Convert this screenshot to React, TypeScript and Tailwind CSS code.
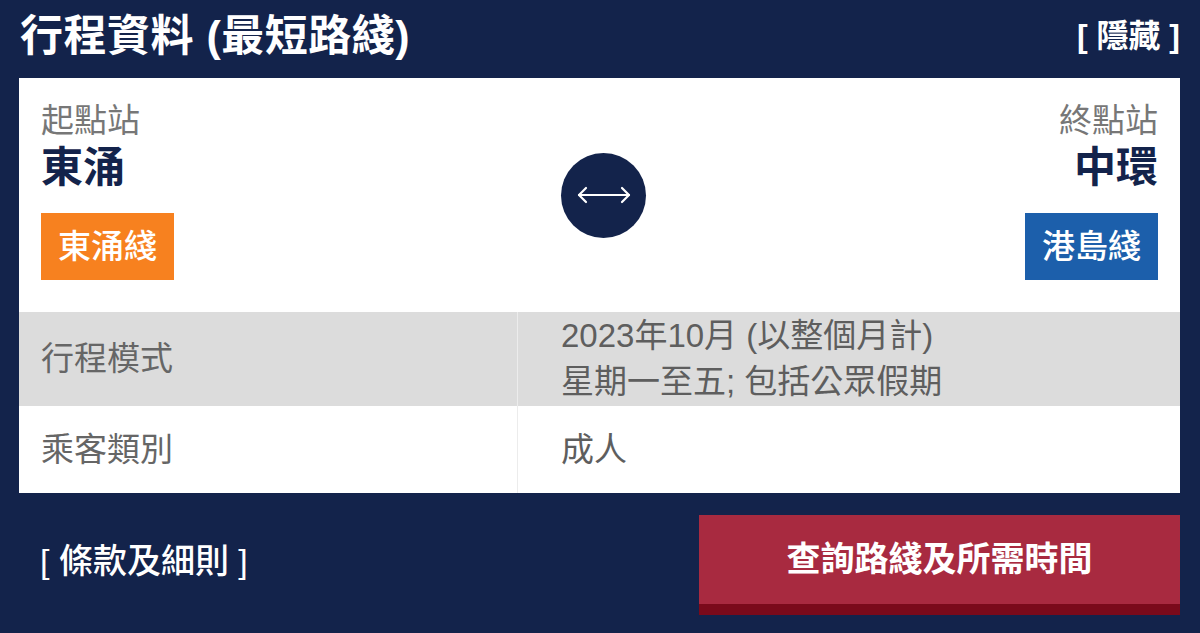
import React from "react";

const FONT = { fontFamily: '"Liberation Sans", "Noto Sans CJK TC", sans-serif' };

function SwapArrow() {
  return (
    <svg width="54" height="20" viewBox="0 0 54 20" fill="none" stroke="white" strokeWidth="2.2" strokeLinecap="round" strokeLinejoin="round">
      <line x1="2" y1="10" x2="52" y2="10" />
      <polyline points="9,3 2,10 9,17" />
      <polyline points="45,3 52,10 45,17" />
    </svg>
  );
}

export default function App() {
  return (
    <div className="w-[1200px] h-[633px] bg-[#13234b] flex flex-col overflow-hidden" style={FONT}>
      {/* Header */}
      <div className="h-[78px] flex items-center justify-between pl-[20px] pr-[20px] pb-[6px]">
        <h1 className="text-white font-bold text-[43px] leading-none tracking-[0.5px]">行程資料 (最短路綫)</h1>
        <span className="text-white font-bold text-[32px] leading-none">[ 隱藏 ]</span>
      </div>

      {/* Card */}
      <div className="mx-[19px] mr-[20px] bg-white flex flex-col">
        <div className="h-[234px] grid grid-cols-[1fr_auto_1fr] items-center px-[22px]">
          <div className="flex flex-col items-start pb-[10px]">
            <span className="text-[#777777] text-[33px] leading-[42px]">起點站</span>
            <span className="text-[#13234b] font-bold text-[42px] leading-[52px]">東涌</span>
            <span className="mt-[19px] h-[67px] px-[17px] flex items-center bg-[#f7811f] text-white text-[33px] font-medium">東涌綫</span>
          </div>
          <div className="w-[85px] h-[85px] rounded-full bg-[#13234b] flex items-center justify-center ml-[8px]">
            <SwapArrow />
          </div>
          <div className="flex flex-col items-end pb-[10px]">
            <span className="text-[#777777] text-[33px] leading-[42px]">終點站</span>
            <span className="text-[#13234b] font-bold text-[42px] leading-[52px]">中環</span>
            <span className="mt-[19px] h-[67px] px-[17px] flex items-center bg-[#1c5fab] text-white text-[33px] font-medium">港島綫</span>
          </div>
        </div>

        {/* Table */}
        <div className="grid grid-cols-[498px_1fr] bg-[#dcdcdc] h-[94px]">
          <div className="flex items-center pl-[22px] text-[#666666] text-[33px]">行程模式</div>
          <div className="border-l border-[#ececec] flex flex-col justify-center pl-[43px] text-[#5e5e5e] text-[33px] leading-[46px]">
            <span>2023年10月 (以整個月計)</span>
            <span>星期一至五; 包括公眾假期</span>
          </div>
        </div>
        <div className="grid grid-cols-[498px_1fr] bg-white h-[87px]">
          <div className="flex items-center pl-[22px] text-[#666666] text-[33px]">乘客類別</div>
          <div className="border-l border-[#ececec] flex items-center pl-[43px] text-[#5e5e5e] text-[33px]">成人</div>
        </div>
      </div>

      {/* Footer */}
      <div className="flex items-start justify-between pl-[40px] pr-[20px] pt-[22px]">
        <span className="text-white text-[34px] font-medium leading-none mt-[29px]">[ 條款及細則 ]</span>
        <button className="w-[481px] h-[100px] bg-[#a82a40] border-b-[11px] border-[#7a0a1b] flex items-center justify-center text-white font-bold text-[34px]">
          查詢路綫及所需時間
        </button>
      </div>
    </div>
  );
}
